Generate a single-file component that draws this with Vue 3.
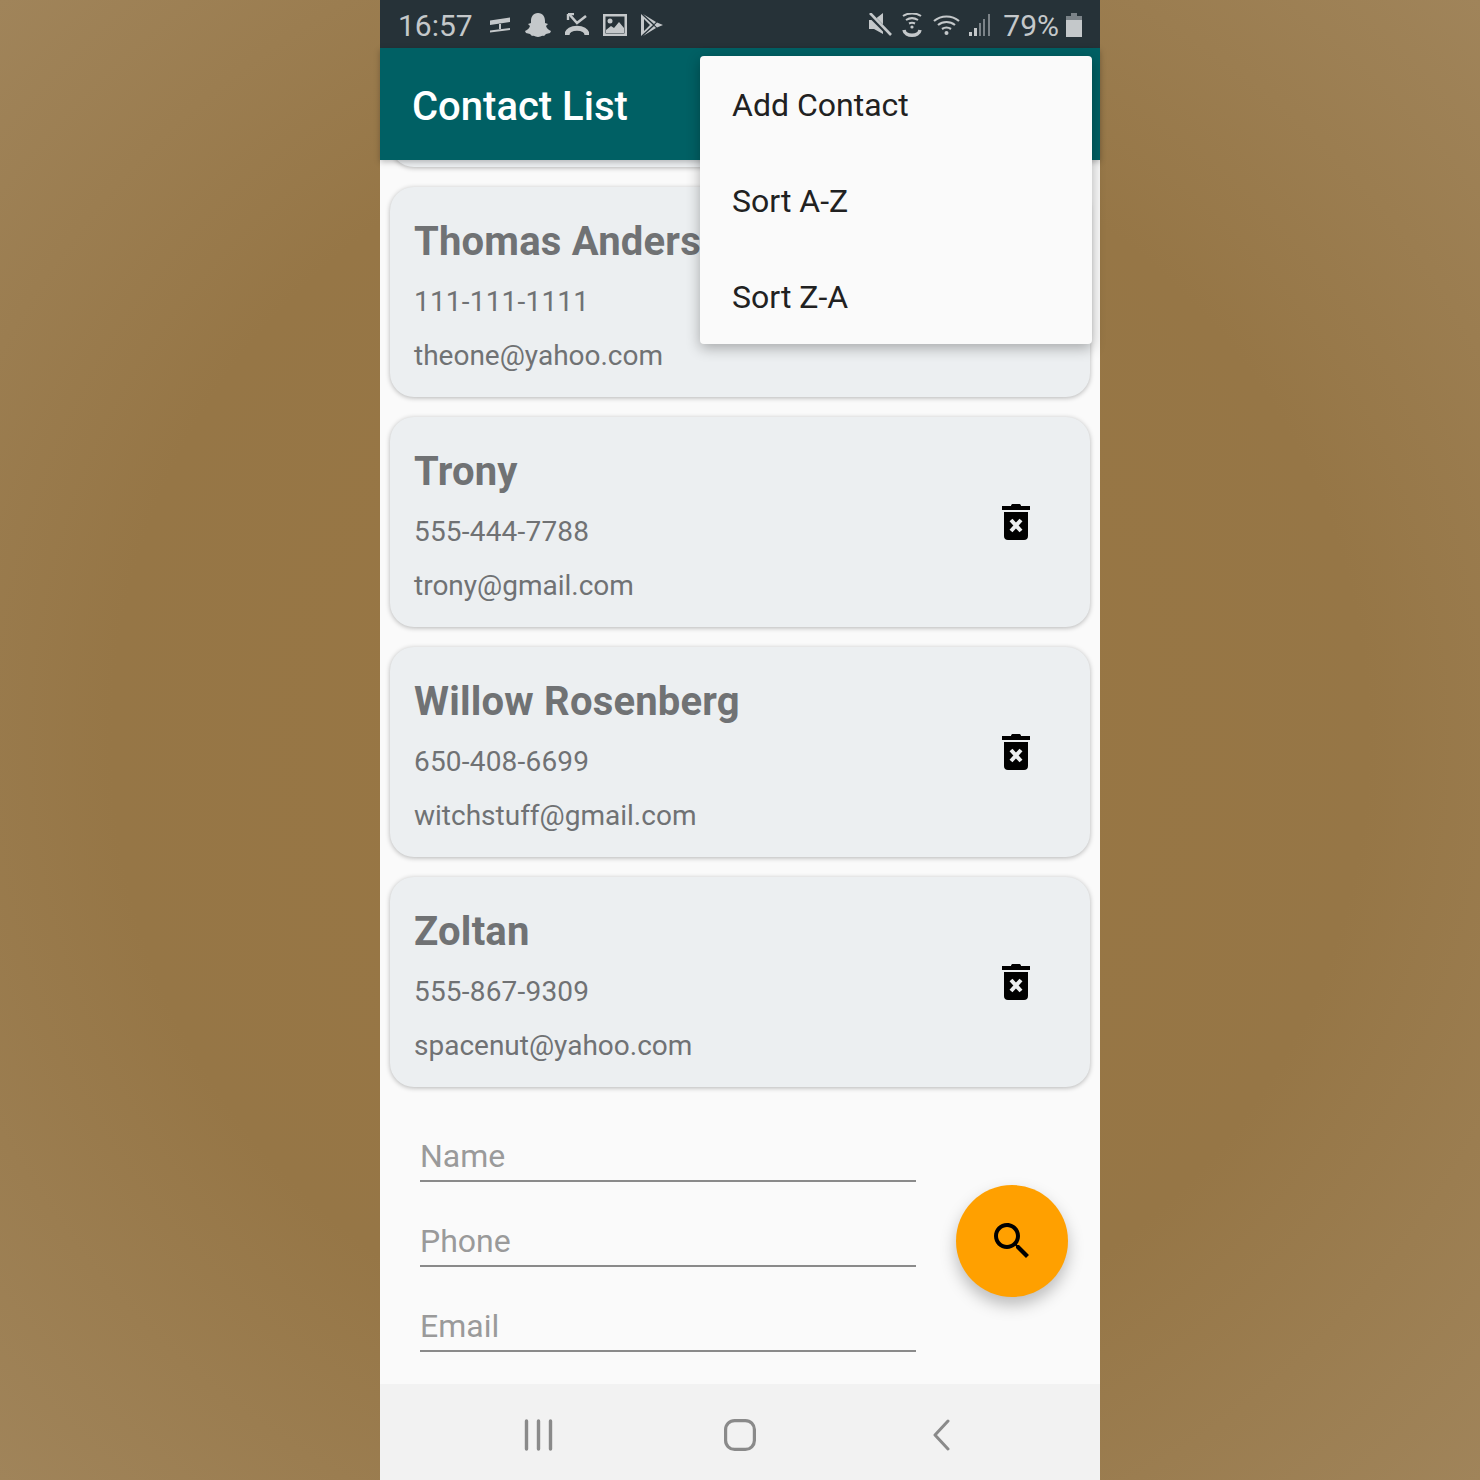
<script setup>
// first entry is the card scrolled away under the toolbar, only its bottom edge shows
const contacts = [
  { name: '', phone: '', email: '' },
  { name: 'Thomas Anderson', phone: '111-111-1111', email: 'theone@yahoo.com' },
  { name: 'Trony', phone: '555-444-7788', email: 'trony@gmail.com' },
  { name: 'Willow Rosenberg', phone: '650-408-6699', email: 'witchstuff@gmail.com' },
  { name: 'Zoltan', phone: '555-867-9309', email: 'spacenut@yahoo.com' },
]
const menu = ['Add Contact', 'Sort A-Z', 'Sort Z-A']
const fields = ['Name', 'Phone', 'Email']
</script>

<template>
  <div class="page">
    <div class="phone">
      <header class="status">
        <span class="clock">16:57</span>
        <div class="icons left">
          <svg width="22" height="16" viewBox="0 0 22 16" fill="#c4c8ca">
            <path d="M1 3.500 L21 0.500 V5 L1 8 Z" />
            <rect x="10" y="7" width="2" height="5" />
            <path d="M1 13.500 L21 11 V13 L1 15.500 Z" />
          </svg>
          <svg width="26" height="24" viewBox="0 0 26 24" fill="#c4c8ca">
            <path d="M13 0 C18 0 20 4 20 8 V10 L23 11 L21 13 C22 16 24 17 26 18 L25 20 L21 21 L19 23 C17 22 15 24 13 24 C11 24 9 22 7 23 L5 21 L1 20 L0 18 C2 17 4 16 5 13 L3 11 L6 10 V8 C6 4 8 0 13 0 Z" />
          </svg>
          <svg width="24" height="24" viewBox="0 0 24 24" fill="none" stroke="#c4c8ca">
            <path d="M4 1 L12 10 L21 3" stroke-width="2.600" />
            <path d="M3 1 H9 M3 1 V7" stroke-width="2.400" />
            <path d="M2 22 C2 13 22 13 22 22" stroke-width="5" />
          </svg>
          <svg width="24" height="22" viewBox="0 0 24 22">
            <path fill="#c4c8ca" fill-rule="evenodd" d="M0 0 H24 V22 H0 Z M2.500 2.500 V19.500 H21.500 V2.500 Z" />
            <circle cx="7" cy="7" r="2.500" fill="#c4c8ca" />
            <path fill="#c4c8ca" d="M3 19 V16 L8 12 L11 14 L16 8 L21 14 V19 Z" />
          </svg>
          <svg width="22" height="22" viewBox="0 0 22 22" fill="#c4c8ca">
            <path d="M0 0 L12 11 L0 22 Z M3 5 V17 L9 11 Z" fill-rule="evenodd" />
            <path d="M2 0 L15 8 L13 10 Z M2 22 L15 14 L13 12 Z M16 8.500 L22 11 L16 13.500 L13.500 11 Z" />
          </svg>
        </div>
        <div class="icons right">
          <svg class="mute" width="24" height="24" viewBox="0 0 24 24" fill="#c4c8ca">
            <path d="M1 7 H6 L15 0 V21 L6 16 H1 Z" />
            <path d="M1 1 L23 23" stroke="#263238" stroke-width="5" />
            <path d="M2 0 L23 22" stroke="#c4c8ca" stroke-width="2.600" />
          </svg>
          <svg class="wificall" width="20" height="24" viewBox="0 0 20 24" fill="none" stroke="#c4c8ca" stroke-width="2">
            <path d="M1 3 C6 -0.500 14 -0.500 19 3 M4 7 C8 4.500 12 4.500 16 7 M7 10.500 C9 9.500 11 9.500 13 10.500" />
            <circle cx="10" cy="14" r="1.600" fill="#c4c8ca" stroke="none" />
            <path d="M2 17 C3 24 17 24 18 17" stroke-width="3.500" />
          </svg>
          <svg class="wifi" width="27" height="20" viewBox="0 0 27 20" fill="none" stroke="#c4c8ca" stroke-width="2.200">
            <path d="M1 6 C8 0 19 0 26 6 M5 10 C10 6 17 6 22 10 M9 14 C12 12 15 12 18 14" />
            <circle cx="13.500" cy="18" r="2" fill="#c4c8ca" stroke="none" />
          </svg>
          <svg class="signal" width="22" height="22" viewBox="0 0 22 22" fill="#7b8388">
            <rect x="0" y="18" width="3" height="4" fill="#c4c8ca" />
            <rect x="5" y="14" width="3" height="8" fill="#c4c8ca" />
            <rect x="10" y="9" width="2" height="13" />
            <rect x="14" y="5" width="2" height="17" />
            <rect x="19" y="0" width="2" height="22" />
          </svg>
          <span class="percent">79%</span>
          <svg class="battery" width="16" height="24" viewBox="0 0 16 24">
            <path fill="#7b8388" d="M5 0 H11 V3 H16 V7 H0 V3 H5 Z" />
            <rect y="7" width="16" height="17" fill="#c4c8ca" />
          </svg>
        </div>
      </header>

      <div class="toolbar">Contact List</div>

      <main class="list">
        <article v-for="c in contacts" :key="c.phone" class="card">
          <div v-if="c.name" class="info">
            <h2>{{ c.name }}</h2>
            <p class="phone-no">{{ c.phone }}</p>
            <p class="email">{{ c.email }}</p>
          </div>
          <svg v-if="c.name" class="trash" width="28" height="36" viewBox="0 0 28 36">
            <path d="M9 2 C9 0.500 10 0 11 0 H17 C18 0 19 0.500 19 2 H28 V6 H0 V2 Z" />
            <path d="M2 8 H26 V32 C26 34.500 24.500 36 22 36 H6 C3.500 36 2 34.500 2 32 Z" />
            <path d="M9 16 L19 27 M19 16 L9 27" stroke="#eceff1" stroke-width="4" />
          </svg>
        </article>
      </main>

      <section class="form">
        <div class="fields">
          <div v-for="f in fields" :key="f" class="field">{{ f }}</div>
        </div>
        <button class="fab">
          <svg width="48" height="48" viewBox="0 0 24 24">
            <path d="M15.500 14h-.79l-.28-.27C15.410 12.590 16 11.110 16 9.500 16 5.910 13.090 3 9.500 3S3 5.910 3 9.500 5.910 16 9.500 16c1.610 0 3.090-.59 4.230-1.570l.27.28v.79l5 4.990L20.490 19l-4.990-5zm-6 0C7.010 14 5 11.990 5 9.500S7.010 5 9.500 5 14 7.010 14 9.500 11.990 14 9.500 14z" />
          </svg>
        </button>
      </section>

      <nav class="navbar">
        <svg width="32" height="32" viewBox="0 0 32 32" fill="none" stroke="#8a8a8a" stroke-width="3.400" stroke-linecap="round">
          <path d="M3.500 2 V30 M15.500 2 V30 M27.500 2 V30" />
        </svg>
        <svg class="home" width="32" height="32" viewBox="0 0 32 32" fill="none" stroke="#8a8a8a" stroke-width="3.200">
          <rect x="1.600" y="1.600" width="28.800" height="28.800" rx="9" />
        </svg>
        <svg width="20" height="32" viewBox="0 0 20 32" fill="none" stroke="#8a8a8a" stroke-width="3" stroke-linecap="round" stroke-linejoin="round">
          <path d="M16 2 L3 16 L16 30" />
        </svg>
      </nav>

      <ul class="menu">
        <li v-for="m in menu" :key="m">{{ m }}</li>
      </ul>
    </div>
  </div>
</template>

<style>
body {
  margin: 0;
}
</style>

<style scoped>
.page {
  width: 1480px;
  height: 1480px;
  display: flex;
  justify-content: center;
  background: radial-gradient(ellipse at center, #997642 0%, #967646 60%, #a0845a 100%);
  font-family: Roboto, "Liberation Sans", sans-serif;
}
.phone {
  position: relative;
  width: 720px;
  height: 1480px;
  display: flex;
  flex-direction: column;
  background: #fafafa;
}
.status {
  height: 48px;
  flex-shrink: 0;
  display: flex;
  align-items: center;
  background: #263238;
  color: #c4c8ca;
  padding: 2px 18px 0 18px;
  box-sizing: border-box;
}
.clock {
  font-size: 30px;
  width: 91px;
}
.icons {
  display: flex;
  align-items: center;
}
.left {
  gap: 14px;
}
.right {
  margin-left: auto;
}
.right svg {
  display: block;
}
.wificall {
  margin-left: 10px;
}
.wifi {
  margin-left: 11px;
}
.signal {
  margin-left: 9px;
}
.percent {
  font-size: 30px;
  margin-left: 12px;
}
.battery {
  margin-left: 7px;
}
.toolbar {
  height: 112px;
  flex-shrink: 0;
  box-sizing: border-box;
  padding: 5px 32px 0;
  display: flex;
  align-items: center;
  background: #006064;
  color: #fff;
  font-size: 40px;
  font-weight: 500;
  box-shadow: 0 2px 6px rgba(0, 0, 0, 0.25);
  z-index: 2;
}
.list {
  flex: 1;
  min-height: 0;
  overflow: hidden;
  display: flex;
  flex-direction: column;
  justify-content: flex-end;
  gap: 20px;
  padding: 0 10px 17px;
}
.card {
  flex-shrink: 0;
  height: 210px;
  box-sizing: border-box;
  display: flex;
  align-items: center;
  justify-content: space-between;
  padding: 0 60px 0 24px;
  background: #eceff1;
  border-radius: 24px;
  box-shadow: 0 1px 5px rgba(0, 0, 0, 0.28);
  color: #707274;
}
.info {
  padding-top: 8px;
}
.info h2 {
  margin: -1px 0 0;
  font-size: 40px;
  line-height: 48px;
  font-weight: 700;
  letter-spacing: 0.2px;
}
.info p {
  margin: 0;
  font-size: 28px;
  line-height: 36px;
}
.phone-no {
  margin-top: 18px !important;
  letter-spacing: 0.2px;
}
.email {
  margin-top: 18px !important;
}
.trash {
  display: block;
}
.form {
  height: 280px;
  flex-shrink: 0;
  box-sizing: border-box;
  display: flex;
  align-items: center;
  padding: 0 32px 6px 40px;
  justify-content: space-between;
}
.fields {
  width: 496px;
  display: flex;
  flex-direction: column;
  gap: 40px;
  margin-top: 7px;
}
.field {
  height: 45px;
  box-sizing: border-box;
  border-bottom: 2px solid #8a8a8a;
  color: #9a9a9a;
  font-size: 32px;
  line-height: 38px;
}
.fab {
  width: 112px;
  height: 112px;
  padding: 0;
  border: 0;
  border-radius: 50%;
  background: #ffa000;
  display: flex;
  align-items: center;
  justify-content: center;
  box-shadow: 0 8px 16px rgba(0, 0, 0, 0.25);
}
.navbar {
  height: 96px;
  flex-shrink: 0;
  box-sizing: border-box;
  display: flex;
  align-items: center;
  justify-content: space-between;
  padding: 6px 148px 0 143px;
  background: #f2f2f2;
}
.home {
  margin-right: 7px;
}
.menu {
  position: absolute;
  top: 56px;
  left: 320px;
  width: 392px;
  margin: 0;
  padding: 0;
  list-style: none;
  background: #fafafa;
  border-radius: 4px;
  box-shadow: 0 4px 14px rgba(0, 0, 0, 0.3);
  z-index: 5;
}
.menu li {
  height: 96px;
  line-height: 98px;
  padding-left: 32px;
  font-size: 32px;
  color: #212121;
}
</style>
